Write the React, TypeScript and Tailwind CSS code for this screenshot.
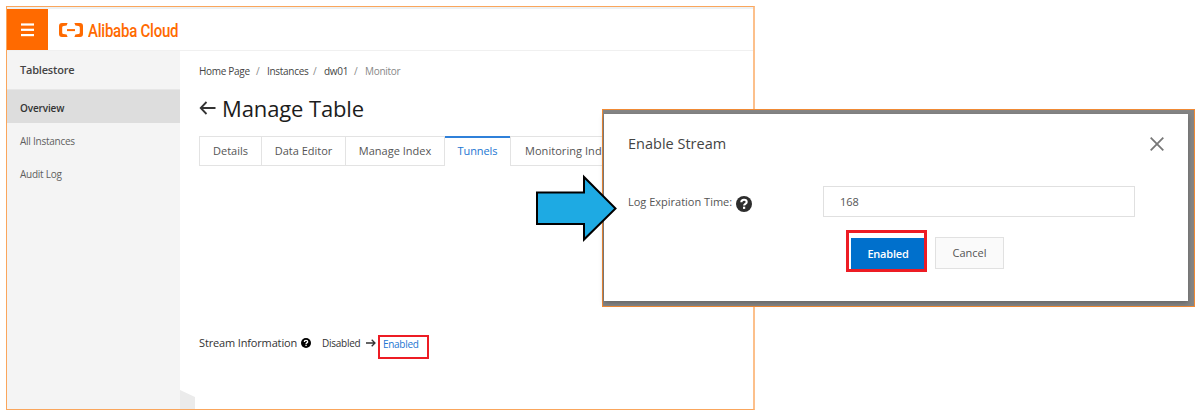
import React from "react";

const navItems = ["All Instances", "Audit Log"];

function HelpIcon({ className }: { className: string }) {
  return (
    <svg viewBox="0 0 16 16" className={className} aria-hidden="true">
      <circle cx="8" cy="8" r="8" fill="currentColor" />
      <path d="M5.3 6.3C5.3 4.6 6.5 3.7 8 3.7s2.7.9 2.7 2.3c0 1.8-2.6 1.8-2.6 3.5" fill="none" stroke="white" strokeWidth="2.1" />
      <rect x="7" y="10.7" width="2.2" height="2.2" fill="white" />
    </svg>
  );
}

function Header() {
  return (
    <header className="flex h-[42px] shrink-0 items-stretch border-b border-[#f0f0f0]">
      <button className="flex w-[41px] items-center justify-center bg-[#ff6a00]" aria-label="Menu">
        <svg viewBox="0 0 13 14" className="h-[14px] w-[13px]" fill="white">
          <rect y="0.4" width="13" height="2.2" />
          <rect y="5.7" width="13" height="2.2" />
          <rect y="11" width="13" height="2.2" />
        </svg>
      </button>
      <div className="flex items-center pl-[11px]">
        <svg viewBox="0 0 24 14" className="mt-px h-[14px] w-6" fill="#ff6a00">
          <path d="M8.6 0H3C1 0 0 1 0 3v8c0 2 1 3 3 3h5.600l-1-2.400-3-.5C3.600 10.900 3.200 10.400 3.200 9.500v-5c0-.9.4-1.400 1.400-1.600l3-.5Z" />
          <path d="M15.400 0H21c2 0 3 1 3 3v8c0 2-1 3-3 3h-5.600l1-2.400 3-.5c1-.2 1.400-.7 1.400-1.600v-5c0-.9-.4-1.400-1.400-1.600l-3-.5Z" />
          <rect x="8" y="6.100" width="8" height="2" />
        </svg>
        <span className="ml-[5px] mt-px origin-left scale-x-[0.79] whitespace-nowrap font-['Roboto',sans-serif] text-[19px] font-medium leading-none tracking-[-0.3px] text-[#ff6a00]">
          Alibaba Cloud
        </span>
      </div>
    </header>
  );
}

function Sidebar() {
  return (
    <aside className="w-[173px] shrink-0 bg-[#f4f4f4] text-[10px] text-[#5f5f5f]">
      <div className="flex h-[39px] items-center border-b border-[#e6e6e6] pl-[13px] pt-px text-[11px] font-semibold tracking-[-0.2px] text-[#444]">
        Tablestore
      </div>
      <div className="flex h-[33px] items-center bg-[#dddddd] pl-[13px] pt-[4px] font-semibold tracking-[-0.15px] text-[#333]">Overview</div>
      {navItems.map((item) => (
        <div key={item} className="flex h-[33px] items-center pl-[13px] pt-[4px] tracking-[-0.25px]">
          {item}
        </div>
      ))}
    </aside>
  );
}

function Main() {
  return (
    <main className="relative flex flex-1 flex-col overflow-hidden pl-[19px]">
      <nav className="mt-[12px] flex h-4 items-center text-[10px] tracking-[-0.3px] text-[#444]">
        <span className="w-[57px]">Home Page</span>
        <span className="w-[11px] text-[#888]">/</span>
        <span className="w-[46px]">Instances</span>
        <span className="w-[11px] text-[#888]">/</span>
        <span className="w-[30px]">dw01</span>
        <span className="w-[11px] text-[#888]">/</span>
        <span className="text-[#888]">Monitor</span>
      </nav>
      <div className="mt-[13px] flex h-8 items-center">
        <svg viewBox="0 0 17 14" className="mt-[-1px] h-[14px] w-[17px]" fill="none" stroke="#333" strokeWidth="1.8">
          <path d="M7.500 1 1.700 7l5.800 6M1.700 7H16.500" />
        </svg>
        <h1 className="ml-[6px] whitespace-nowrap text-[22px] leading-8 tracking-[-0.120px] text-[#1c1c1c]">Manage Table</h1>
      </div>
      <div className="mt-[12px] flex h-[30px] text-[11px] text-[#555]">
        <div className="flex w-[63px] items-center justify-center border border-[#e3e3e3]">Details</div>
        <div className="flex w-[84px] items-center justify-center border-y border-r border-[#e3e3e3]">Data Editor</div>
        <div className="flex w-[99px] items-center justify-center border-y border-r border-[#e3e3e3]">Manage Index</div>
        <div className="flex w-[65px] items-center justify-center border-t-2 border-[#2f80d9] pb-[2px] tracking-[-0.1px] text-[#2376d2]">Tunnels</div>
        <div className="flex w-[180px] items-center border border-[#e3e3e3] pl-[14px] tracking-[0.05px]">Monitoring Indicators</div>
      </div>
      <div className="mt-[169px] flex h-[24px] items-start whitespace-nowrap text-[10px] text-[#333]">
        <span className="w-[102px] text-[11px] leading-4 tracking-[-0.150px]">Stream Information</span>
        <HelpIcon className="mt-[3px] h-[10px] w-[10px] text-black" />
        <span className="ml-[11px] w-[44px] leading-4 tracking-[-0.250px]">Disabled</span>
        <svg viewBox="0 0 10 8" className="mt-[4px] h-2 w-[10px]" fill="none" stroke="#333" strokeWidth="1.3">
          <path d="M0 4h9M5.7.7 9 4 5.7 7.3" />
        </svg>
        <a className="ml-[2px] flex h-[24px] w-[51px] items-center border-2 border-[#ed1c24] pb-[5px] pl-[3px] tracking-[-0.300px] text-[#2376d2]">Enabled</a>
      </div>
      <svg viewBox="0 0 15 19" className="absolute bottom-0 left-0 h-[19px] w-[15px]">
        <path d="M0 0 15 7V19H0Z" fill="#ebebeb" />
      </svg>
    </main>
  );
}

function StreamDialog() {
  return (
    <section role="dialog" className="absolute left-[602px] top-[109px] h-[198px] w-[593px] border border-[#f08a35] bg-[#858585] pb-[5px] pl-[1px] pr-[6px] pt-1">
      <div className="flex h-full flex-col bg-white pl-[24px] pr-6 shadow-[0_2px_5px_rgba(0,0,0,0.25)]">
        <div className="mt-[18px] flex h-6 items-center justify-between">
          <h2 className="text-[14.500px] text-[#444]">Enable Stream</h2>
          <svg viewBox="0 0 14 14" className="h-[14px] w-[14px]" stroke="#777" strokeWidth="1.8">
            <path d="m.7.7 12.600 12.600M13.300.7.7 13.300" />
          </svg>
        </div>
        <div className="mt-[30px] flex h-[31px] items-center text-[#555]">
          <span className="mt-[2px] w-[108px] whitespace-nowrap text-[11px]">Log Expiration Time:</span>
          <HelpIcon className="mt-[4px] h-[16px] w-[16px] text-[#2d2d2d]" />
          <div className="ml-[71px] flex h-[31px] w-[312px] items-center border border-[#e0e0e0] pl-4 pt-px text-[11px]">168</div>
        </div>
        <div className="ml-[218px] mt-[13px] flex items-start text-[11px]">
          <div className="h-[42px] w-[81px] border-[3px] border-[#ed1c24] pl-[2px] pt-[5px]">
            <button className="flex h-full w-full items-center justify-center bg-[#0070cc] pl-px pt-px font-semibold tracking-[-0.200px] text-white">Enabled</button>
          </div>
          <button className="ml-[8px] mt-[7px] flex h-8 w-[69px] items-center justify-center border border-[#e1e1e1] bg-[#fafafa] pt-px text-[#555]">Cancel</button>
        </div>
      </div>
    </section>
  );
}

export default function App() {
  return (
    <div className="relative h-[419px] w-[1200px] overflow-hidden bg-white font-['Open_Sans','Noto_Sans',sans-serif]">
      <div className="pl-[6px] pt-[6px]">
        <div className="flex h-[404px] w-[749px] flex-col border border-r-2 border-[#faa65c] border-r-[#fcc08c]">
          <div className="h-[2px] shrink-0 bg-[#edf1f3]" />
          <Header />
          <div className="flex min-h-0 flex-1">
            <Sidebar />
            <Main />
          </div>
        </div>
      </div>
      <StreamDialog />
      <svg viewBox="0 0 82 68" className="absolute left-[535px] top-[174px] h-[68px] w-[82px]">
        <path d="M2 18.500H49V3L80.500 34.500 49 65.500V50H2Z" fill="#1eaae3" stroke="black" strokeWidth="2" />
      </svg>
    </div>
  );
}
